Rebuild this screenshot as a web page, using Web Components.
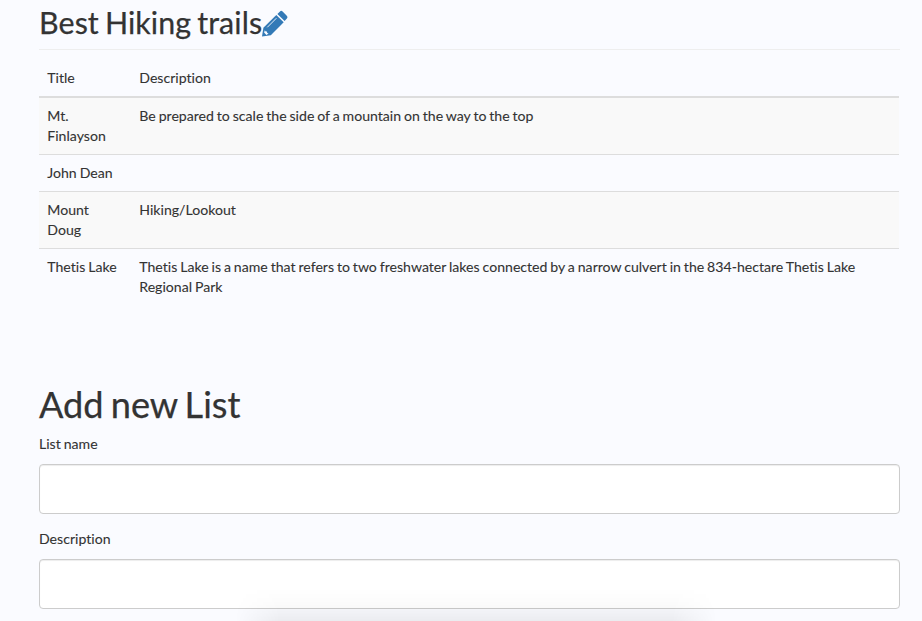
<!DOCTYPE html>
<html lang="en"><head><meta charset="utf-8"><title>Best Hiking trails</title>
<style>
*{box-sizing:border-box}
html,body{margin:0;height:621px;overflow:hidden}
body{background:#fafbff;color:#333;font:14.1px/20px Lato,sans-serif;position:relative;font-variant-ligatures:none;word-spacing:-.7px;-webkit-text-stroke:.1px #333}
</style></head><body>
<hiking-page></hiking-page>
<script>
const define=(name,html,setup)=>{
  const t=document.createElement('template');t.innerHTML='<style>*{box-sizing:border-box}</style>'+html;
  customElements.define(name,class extends HTMLElement{
    constructor(){super();this.attachShadow({mode:'open'}).append(t.content.cloneNode(true));}
    connectedCallback(){if(setup)setup(this,this.shadowRoot);}
  });
};
define('pencil-icon',`<style>:host{display:block;width:28px;height:28px}svg{display:block}</style>
<svg width="28" height="28" viewBox="0 0 28 28"><g fill="#337ab7"><path d="M1 26.5 2.4 17.8 15.3 4.9 22.7 12.3 9.8 25.2Z"/><path d="M16.4 3.9 19 1.4Q20.3.3 21.6 1.5L26 5.9Q27.1 7.2 25.9 8.5L23.6 11Z"/></g><path d="M6.3 17.3 15.4 8.2" stroke="#fafbff" stroke-width=".9"/><path d="M3.8 20.3 4.7 21.4 6 21.4 6.2 23 7.6 23.4 5.4 24.9 3.1 22.6Z" fill="#fafbff"/></svg>`);
define('list-heading',`<style>:host{display:flex;height:50px;border-bottom:1px solid #eee}
h2{margin:5px 0 0;font-size:30.4px;line-height:35px;font-weight:400;white-space:nowrap;word-spacing:-1.8px;letter-spacing:.08px;-webkit-text-stroke-width:.25px}pencil-icon{margin:10px 0 0 -1px}</style><h2><slot></slot></h2><pencil-icon></pencil-icon>`);
define('trail-row',`<style>:host{display:grid;grid-template-columns:92px 1fr;border-top:1px solid #ddd}
:host([striped]){background:#f9f9f9}:host([header]){border-top:0}div{padding:8px 8px 8px 8.3px}</style><div><slot name="title"></slot></div><div><slot></slot></div>`);
define('trail-table',`<style>:host{display:block;width:860px;padding-top:10px}.body{border-top:1px solid #ddd}</style>
<trail-row header><span slot="title">Title</span>Description</trail-row><div class="body"><slot></slot></div>`);
define('text-field',`<style>:host{display:block}label{display:block;height:20px;margin-bottom:10px}
input{display:block;width:100%;height:50px;border:1px solid #ccc;border-radius:4px;background:#fff;box-shadow:inset 0 1px 1px #00000013}</style><label for="field"></label><input id="field" type="text">`,
(el,r)=>{r.querySelector('label').textContent=el.getAttribute('label');});
define('list-form',`<style>:host{display:flex;flex-direction:column;gap:15px}h1{font-size:36.2px;line-height:41px;height:42px;font-weight:400;margin:0 0 -7px;word-spacing:-2.2px;-webkit-text-stroke-width:.25px}</style>
<h1>Add new List</h1><text-field label="List name"></text-field><text-field label="Description"></text-field>`);
define('bottom-shade',`<style>:host{position:absolute;left:0;right:0;bottom:0;height:50px;overflow:hidden;pointer-events:none}
:host::before{content:"";position:absolute;inset:17px 205px 0 235px;background:linear-gradient(#0000,#00000004 50%,#0000000f);
-webkit-mask:linear-gradient(90deg,#0000,#000 45px,#000 calc(100% - 45px),#0000)}</style>`);
define('hiking-page',`<style>:host{display:block;padding:0 22px 0 39px}list-form{margin-top:79px}</style>
<list-heading>Best Hiking trails</list-heading>
<trail-table><trail-row striped><span slot="title">Mt. Finlayson</span>Be prepared to scale the side of a mountain on the way to the top</trail-row>
<trail-row><span slot="title">John Dean</span></trail-row>
<trail-row striped><span slot="title">Mount Doug</span>Hiking/Lookout</trail-row>
<trail-row><span slot="title">Thetis Lake</span>Thetis Lake is a name that refers to two freshwater lakes connected by a narrow culvert in the 834-hectare Thetis Lake Regional Park</trail-row></trail-table>
<list-form></list-form><bottom-shade></bottom-shade>`);
</script></body></html>
